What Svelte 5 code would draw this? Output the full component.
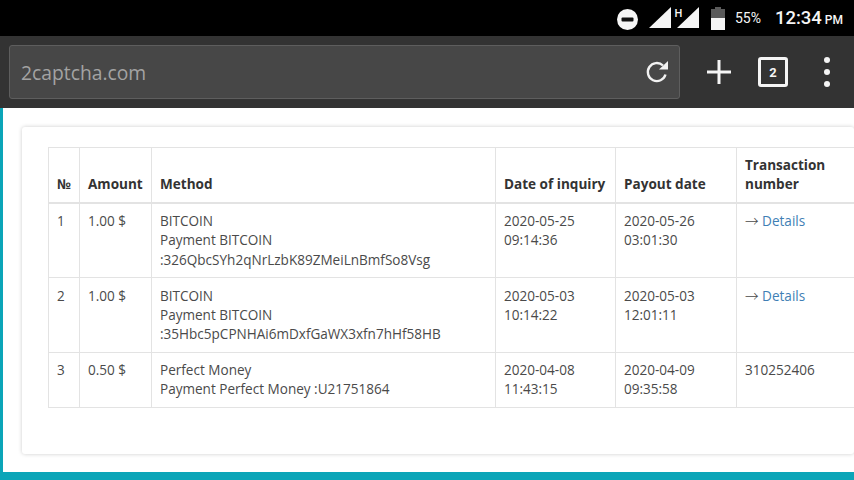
<script lang="ts">
const rows = [
  { n: 1, amount: '1.00 $', method: ['BITCOIN', 'Payment BITCOIN', ':326QbcSYh2qNrLzbK89ZMeiLnBmfSo8Vsg'], inquiry: ['2020-05-25', '09:14:36'], payout: ['2020-05-26', '03:01:30'], tx: null },
  { n: 2, amount: '1.00 $', method: ['BITCOIN', 'Payment BITCOIN', ':35Hbc5pCPNHAi6mDxfGaWX3xfn7hHf58HB'], inquiry: ['2020-05-03', '10:14:22'], payout: ['2020-05-03', '12:01:11'], tx: null },
  { n: 3, amount: '0.50 $', method: ['Perfect Money', 'Payment Perfect Money :U21751864'], inquiry: ['2020-04-08', '11:43:15'], payout: ['2020-04-09', '09:35:58'], tx: '310252406' }
];
</script>

<div class="screen">
  <div class="status">
    <svg class="dnd" width="21" height="21" viewBox="0 0 21 21"><circle cx="10.5" cy="10.5" r="10.5" fill="#f5f5f5"/><rect x="4.5" y="8.5" width="12" height="4" rx="1" fill="#111"/></svg>
    <svg class="signal" width="50" height="22" viewBox="0 0 50 22">
      <polygon points="0,21 22,0 22,21" fill="#f5f5f5"/>
      <polygon points="28,21 50,0 50,21" fill="#f5f5f5"/>
      <text x="25.5" y="9.5" class="h">H</text>
    </svg>
    <svg class="battery" width="14" height="23" viewBox="0 0 14 23"><rect x="4" y="0" width="6" height="2" fill="#5a5a5a"/><rect x="0" y="2" width="14" height="9" fill="#5a5a5a"/><rect x="0" y="11" width="14" height="12" fill="#f5f5f5"/></svg>
    <span class="pct">55%</span>
    <span class="time">12:34</span>
    <span class="ampm">PM</span>
  </div>

  <div class="toolbar">
    <div class="url">
      <span>2captcha.com</span>
      <svg width="24" height="24" viewBox="0 0 24 24" fill="none"><path d="M20.5 14.5A9 9 0 1 1 18 5.5" stroke="#f2f2f2" stroke-width="2.4"/><polygon points="14,9.5 23,9.5 23,1" fill="#f2f2f2"/></svg>
    </div>
    <svg class="plus" width="26" height="26" viewBox="0 0 26 26"><path d="M13 1v24M1 13h24" stroke="#f5f5f5" stroke-width="3"/></svg>
    <div class="tabs">2</div>
    <div class="dots"><i></i><i></i><i></i></div>
  </div>

  <div class="page">
    <div class="card">
      <table>
        <colgroup>
          <col style="width:31px" /><col style="width:72px" /><col style="width:344px" /><col style="width:120px" /><col style="width:121px" /><col style="width:140px" />
        </colgroup>
        <thead>
          <tr>
            <th>№</th><th>Amount</th><th>Method</th><th>Date of inquiry</th><th>Payout date</th><th>Transaction number</th>
          </tr>
        </thead>
        <tbody>
          {#each rows as row}
            <tr>
              <td>{row.n}</td>
              <td>{row.amount}</td>
              <td>{#each row.method as line}<div>{line}</div>{/each}</td>
              <td>{#each row.inquiry as line}<div>{line}</div>{/each}</td>
              <td>{#each row.payout as line}<div>{line}</div>{/each}</td>
              <td>
                {#if row.tx}{row.tx}{:else}<span class="arrow">→</span> <a href="#details">Details</a>{/if}
              </td>
            </tr>
          {/each}
        </tbody>
      </table>
    </div>
  </div>
</div>

<style>
:global(body) {
  margin: 0;
  overflow: hidden;
}

.screen {
  width: 854px;
  height: 480px;
  overflow: hidden;
  display: flex;
  flex-direction: column;
  font-family: "Open Sans", sans-serif;
}

.status {
  height: 36px;
  flex: none;
  background: #000;
  display: flex;
  align-items: center;
  justify-content: flex-end;
  padding-right: 11px;
  color: #f5f5f5;
  font-family: Roboto, sans-serif;
}

.dnd {
  margin: 2px 11px 0 0;
}

.signal {
  margin-right: 12px;
  overflow: visible;
}

.h {
  font: 500 11px Roboto, sans-serif;
  fill: #f5f5f5;
}

.battery {
  margin-right: 10px;
}

.pct {
  font-size: 14px;
  margin-right: 14px;
}

.time {
  font-size: 18.5px;
  font-weight: 500;
  margin-right: 3px;
}

.ampm {
  font-size: 12px;
  font-weight: 500;
  padding-top: 3px;
}

.toolbar {
  height: 72px;
  flex: none;
  background: #333;
  display: flex;
  align-items: center;
  padding-left: 9px;
  box-sizing: border-box;
}

.url {
  width: 671px;
  height: 54px;
  box-sizing: border-box;
  background: #474747;
  border: 1px solid #5e5e5e;
  border-radius: 3px;
  display: flex;
  align-items: center;
  justify-content: space-between;
  padding: 0 10px 0 11px;
  font-size: 19.3px;
  color: #a3a3a3;
}

.plus {
  margin-left: 26px;
}

.tabs {
  width: 30px;
  height: 30px;
  box-sizing: border-box;
  margin-left: 26px;
  border: 3px solid #f5f5f5;
  border-radius: 3px;
  color: #f5f5f5;
  font: bold 13px Roboto, sans-serif;
  display: flex;
  align-items: center;
  justify-content: center;
}

.dots {
  margin-left: 36px;
  display: flex;
  flex-direction: column;
  gap: 6px;
}

.dots i {
  width: 6px;
  height: 6px;
  border-radius: 50%;
  background: #f5f5f5;
}

.page {
  flex: 1;
  min-height: 0;
  background: #fff;
  border-left: 3px solid #0ba5b8;
  border-bottom: 8px solid #0ba5b8;
  padding: 19px 0 18px 19px;
  display: flex;
}

.card {
  flex: 1;
  min-width: 0;
  background: #fff;
  border-radius: 3px;
  box-shadow: 0 0 4px rgba(0, 0, 0, 0.2);
  padding: 20px 0 0 26px;
  overflow: hidden;
}

table {
  border-collapse: collapse;
  table-layout: fixed;
  width: 828px;
  font-size: 13.55px;
  line-height: 19.1px;
  color: #4a4a4a;
}

th, td {
  border: 1px solid #e3e3e3;
  padding: 8.2px 8px 7.8px;
  text-align: left;
  vertical-align: top;
}

th {
  vertical-align: bottom;
  border-bottom-width: 2px;
  color: #333;
  font-weight: 700;
}

a {
  color: #3f7fb5;
  text-decoration: none;
}

.arrow {
  font-family: "Noto Sans CJK JP", sans-serif;
  font-weight: 300;
  line-height: 0;
}
</style>
